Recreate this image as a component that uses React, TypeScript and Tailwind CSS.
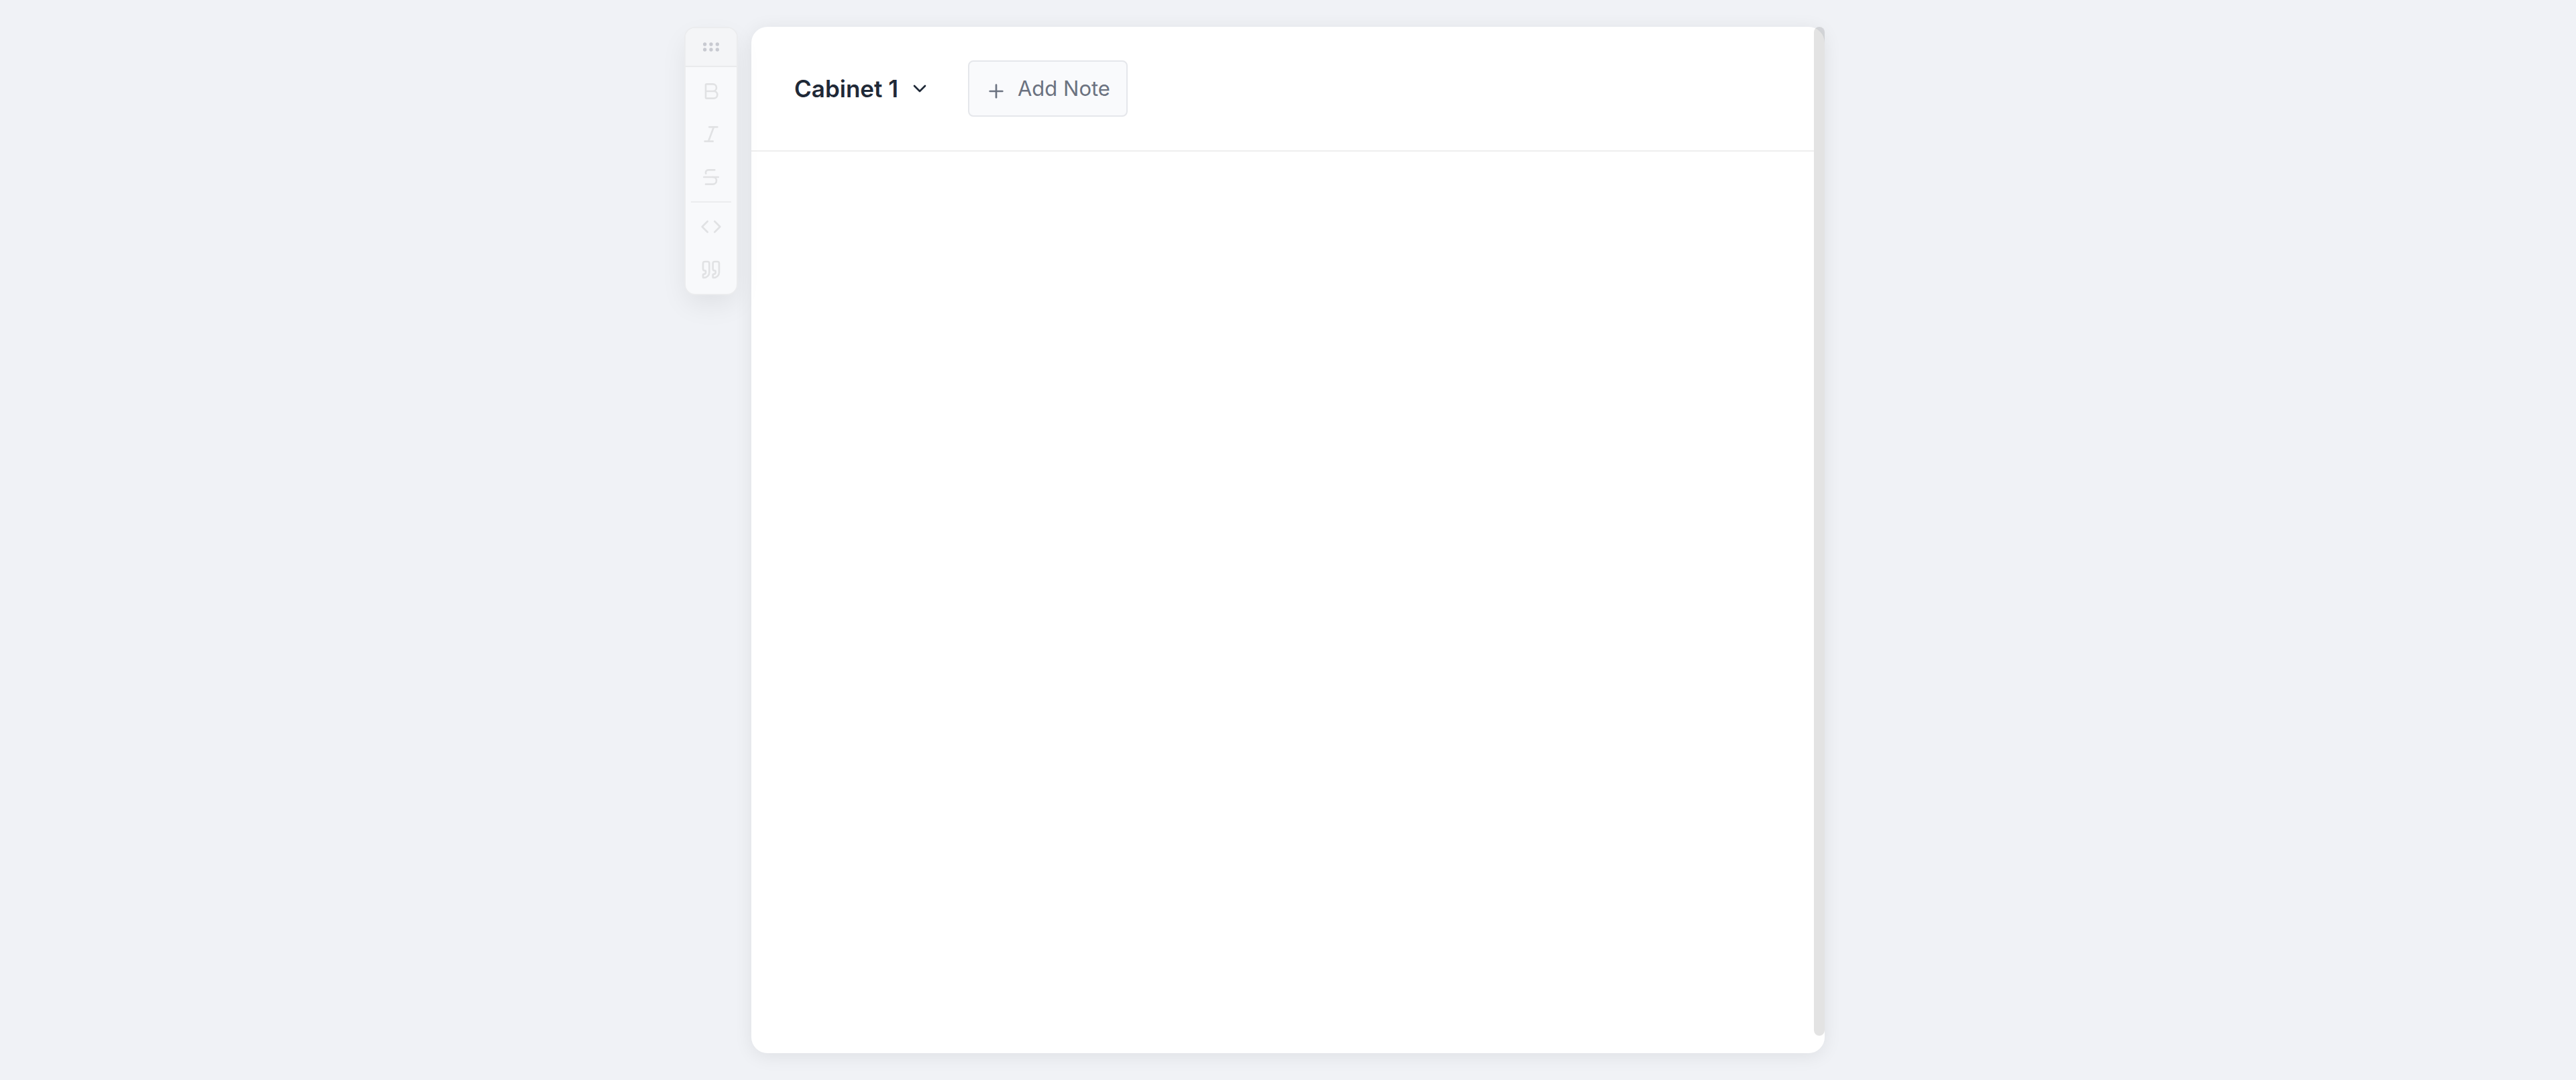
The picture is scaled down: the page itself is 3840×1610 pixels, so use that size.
import { Bold, ChevronDown, Code, GripHorizontal, Italic, Plus, Quote, Strikethrough } from "lucide-react";

const marks = [
  { label: "Bold", Icon: Bold },
  { label: "Italic", Icon: Italic },
  { label: "Strikethrough", Icon: Strikethrough },
];

const blocks = [
  { label: "Code", Icon: Code },
  { label: "Quote", Icon: Quote },
];

function ToolButton({ label, Icon }: (typeof marks)[number]) {
  return (
    <button type="button" disabled aria-label={label} className="flex size-16 items-center justify-center text-[#e1e2e4]">
      <Icon size={32} />
    </button>
  );
}

function Toolbar() {
  return (
    <div
      role="toolbar"
      aria-label="Formatting"
      className="absolute right-full top-0 mr-5 w-20 overflow-hidden rounded-2xl border-2 border-[#ebecee] bg-[#f8f9fb] shadow-[0_16px_40px_-4px_rgba(0,0,0,0.08)]"
    >
      <button type="button" aria-label="Move toolbar" className="flex h-[58px] w-full items-center justify-center border-b-2 border-[#e9eaec] bg-[#f4f5f7] text-[#c8cad1]">
        <GripHorizontal size={32} />
      </button>
      <div className="flex flex-col items-center p-1">
        {marks.map((tool) => (
          <ToolButton key={tool.label} {...tool} />
        ))}
        <div className="my-1 h-0.5 w-15 bg-[#ebecee]" />
        {blocks.map((tool) => (
          <ToolButton key={tool.label} {...tool} />
        ))}
      </div>
    </div>
  );
}

export default function App() {
  return (
    <div className="flex h-screen justify-center bg-[#f0f2f6] py-10 font-[Inter,sans-serif]">
      <main className="relative w-full max-w-[1600px] rounded-3xl bg-white shadow-[0_4px_28px_rgba(0,0,0,0.08)]">
        <Toolbar />
        <header className="mr-4 flex items-center gap-14 border-b-2 border-[#eeeeee] py-[50px] pl-16">
          <button type="button" className="flex items-center gap-4 text-[35px] leading-10 font-semibold text-[#1f2937]">
            Cabinet 1
            <ChevronDown size={32} />
          </button>
          <button type="button" className="flex items-end gap-4 rounded-lg border-2 border-[#e5e7eb] bg-[#f9fafc] px-6 py-5 text-[31px] leading-10 text-[#6b7280]">
            <Plus size={32} />
            Add Note
          </button>
        </header>
        <div className="absolute bottom-[26px] right-0 top-0 w-4 rounded-full bg-black/11" />
      </main>
    </div>
  );
}
